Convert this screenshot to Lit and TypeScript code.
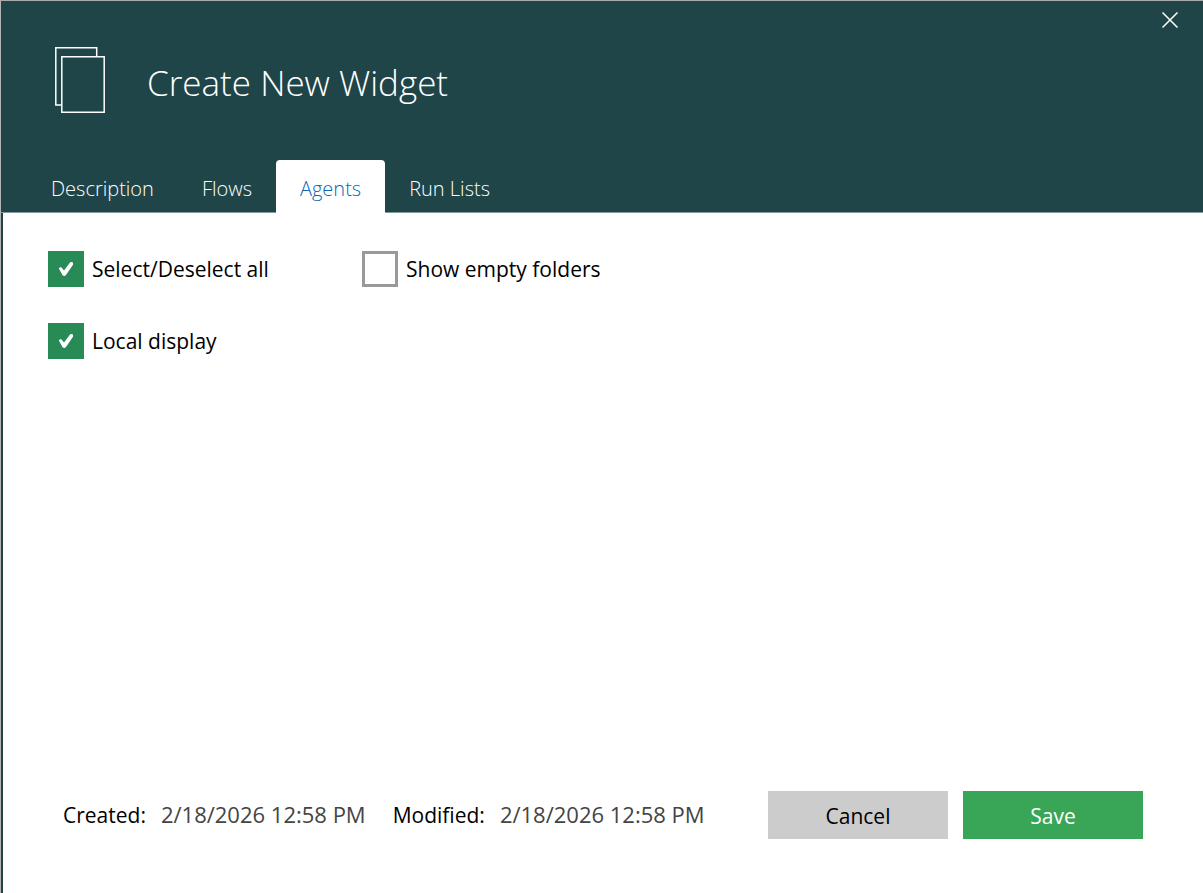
import { LitElement, html, css } from "lit";
import { customElement, property, state } from "lit/decorators.js";
import { classMap } from "lit/directives/class-map.js";

@customElement("check-option")
class CheckOption extends LitElement {
  @property() label = "";
  @property({ type: Boolean }) checked = false;

  static styles = css`
    :host {
      display: flex;
    }
    .option {
      display: flex;
      align-items: center;
      gap: 8px;
      font-size: 21px;
      line-height: 36px;
      color: #000;
      white-space: nowrap;
    }
    .field {
      display: grid;
      width: 36px;
      height: 36px;
    }
    .box,
    .tick {
      grid-area: 1 / 1;
      width: 36px;
      height: 36px;
    }
    .box {
      appearance: none;
      box-sizing: border-box;
      margin: 0;
      border: 3px solid #999;
      background: #fff;
    }
    .box:checked {
      border-color: #288a54;
      background: #288a54;
    }
    .tick {
      pointer-events: none;
      visibility: hidden;
      fill: #fff;
    }
    .box:checked + .tick {
      visibility: visible;
    }
  `;

  private toggle(e: Event) {
    this.checked = (e.target as HTMLInputElement).checked;
  }

  render() {
    return html`
      <label class="option">
        <span class="field">
          <input class="box" type="checkbox" .checked=${this.checked} @change=${this.toggle} />
          <svg class="tick" viewBox="0 0 36 36" aria-hidden="true">
            <path d="M10.8 17.4Q12 15.6 13.6 16.4L16 19.6 22 11.4Q23.6 10.4 25 11.6V13.8L17.8 24.2Q16.2 25.6 14.6 24.2Z" />
          </svg>
        </span>
        <span>${this.label}</span>
      </label>
    `;
  }
}

@customElement("app-root")
class AppRoot extends LitElement {
  @state() private active = "Agents";
  private tabs = ["Description", "Flows", "Agents", "Run Lists"];

  static styles = css`
    :host {
      display: block;
      font-family: "Open Sans", "Noto Sans", sans-serif;
      font-size: 21px;
      color: #000;
    }
    .window {
      box-sizing: border-box;
      min-height: 100vh;
      display: flex;
      flex-direction: column;
      border-top: 1px solid #aaa;
      border-left: 1px solid #b4b4b4;
      background: #fff;
    }
    .header {
      display: flex;
      flex-direction: column;
      background: #1f4548;
      color: #fff;
    }
    .bar {
      display: flex;
      justify-content: flex-end;
      height: 38px;
    }
    .close {
      width: 66px;
      height: 38px;
      padding: 0;
      border: 0;
      background: none;
      color: #fff;
    }
    .close svg {
      display: block;
      margin: 0 auto;
    }
    .heading {
      display: flex;
      align-items: center;
      gap: 41px;
      padding: 7px 54px 0;
    }
    .title {
      margin: 0;
      padding-top: 6px;
      font-size: 35px;
      line-height: 62px;
      font-weight: 300;
    }
    .tabs {
      display: flex;
      margin-top: 46px;
      padding-left: 26px;
      border-bottom: 1px solid #839a9c;
    }
    .tab {
      box-sizing: content-box;
      height: 49px;
      padding: 4px 24px 0;
      margin-bottom: -1px;
      border: 0;
      border-radius: 4px 4px 0 0;
      background: none;
      color: #fff;
      font: inherit;
      font-size: 20px;
      font-weight: 300;
      line-height: 49px;
      white-space: nowrap;
    }
    .tab.active {
      background: #fff;
      color: #0a69b4;
    }
    .body {
      flex: 1;
      display: flex;
      flex-direction: column;
      justify-content: space-between;
      gap: 36px;
      border-left: 2px solid #1f4548;
      padding: 38px 60px 54px 45px;
    }
    .options {
      display: grid;
      grid-template-columns: 314px 1fr;
      row-gap: 36px;
    }
    .footer {
      display: flex;
      align-items: center;
      justify-content: space-between;
      gap: 15px;
      padding-left: 15px;
    }
    .dates {
      display: flex;
      gap: 27px;
      margin: 0;
      line-height: 48px;
      white-space: nowrap;
    }
    .date {
      display: flex;
      align-items: baseline;
      gap: 15px;
    }
    .date dd {
      margin: 0;
      font-size: 22px;
      color: #444;
    }
    .actions {
      display: flex;
      gap: 15px;
    }
    .action {
      width: 180px;
      height: 48px;
      padding: 2px 0 0;
      border: 0;
      background: #ccc;
      color: #000;
      font: inherit;
    }
    .action.primary {
      background: #39a657;
      color: #fff;
    }
  `;

  render() {
    return html`
      <main class="window">
        <header class="header">
          <div class="bar">
            <button class="close" aria-label="Close">
              <svg width="18" height="18" viewBox="0 0 18 18" fill="none" stroke="currentColor" stroke-width="1.5">
                <path d="M1.5 1.5 16.5 16.5M16.5 1.5 1.5 16.5" />
              </svg>
            </button>
          </div>
          <div class="heading">
            <svg width="51" height="68" viewBox="0 0 51 68" fill="none" stroke="#fff" stroke-width="1.5" aria-hidden="true">
              <path d="M6.5 59H.8V1.8H41.7V10" />
              <path d="M6.8 10.8H49.2V66.2H6.8Z" />
            </svg>
            <h1 class="title">Create New Widget</h1>
          </div>
          <nav class="tabs" role="tablist">
            ${this.tabs.map(
              (t) => html`<button
                class=${classMap({ tab: true, active: t === this.active })}
                role="tab"
                aria-selected=${t === this.active}
                @click=${() => (this.active = t)}
              >${t}</button>`
            )}
          </nav>
        </header>
        <section class="body">
          <div class="options">
            <check-option label="Select/Deselect all" checked></check-option>
            <check-option label="Show empty folders"></check-option>
            <check-option label="Local display" checked></check-option>
          </div>
          <footer class="footer">
            <dl class="dates">
              <div class="date"><dt>Created:</dt><dd>2/18/2026 12:58 PM</dd></div>
              <div class="date"><dt>Modified:</dt><dd>2/18/2026 12:58 PM</dd></div>
            </dl>
            <div class="actions">
              <button class="action">Cancel</button>
              <button class="action primary">Save</button>
            </div>
          </footer>
        </section>
      </main>
    `;
  }
}
